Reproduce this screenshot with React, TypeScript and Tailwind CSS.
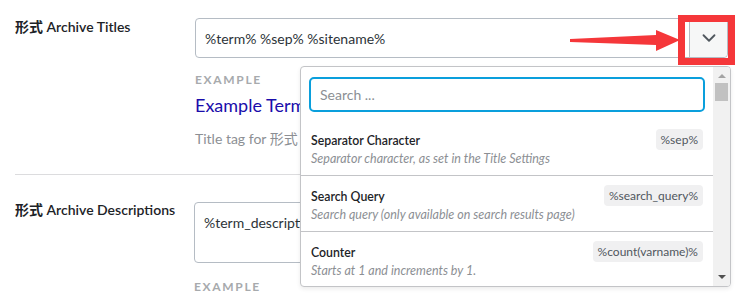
import { ChevronDown } from "lucide-react";

const font = "font-['Lato','Noto_Sans_CJK_SC',sans-serif]";

type Variable = { title: string; desc: string; tag: string };

const variables: Variable[] = [
  { title: "Separator Character", desc: "Separator character, as set in the Title Settings", tag: "%sep%" },
  { title: "Search Query", desc: "Search query (only available on search results page)", tag: "%search_query%" },
  { title: "Counter", desc: "Starts at 1 and increments by 1.", tag: "%count(varname)%" },
];

const VariableRow = ({ v, last }: { v: Variable; last?: boolean }) => (
  <div className={`flex h-[56px] items-start justify-between px-[10px] pt-[9px] ${last ? "" : "border-b border-[#c3c4c7]"}`}>
    <div className="flex flex-col">
      <span className="pt-[3px] text-[12.3px] leading-[18px] font-semibold text-[#1d2327]">{v.title}</span>
      <span className="text-[12.5px] leading-[17px] italic text-[#8c8f94]">{v.desc}</span>
    </div>
    <span className="rounded-[4px] bg-[#f0f0f1] px-[5px] text-[12px] leading-[21px] text-[#50575e]">{v.tag}</span>
  </div>
);

const Dropdown = () => (
  <div className="absolute left-[300px] top-[66px] flex h-[221px] w-[431px] overflow-hidden rounded-[4px] border border-[#c3c4c7] bg-white shadow-[0_2px_4px_rgba(0,0,0,0.08)]">
    <div className="flex-1">
      <div className="px-[8px] pt-[10px] pb-[8px]">
        <div className="flex h-[35px] items-center rounded-[5px] border-2 border-[#0a9fdc] px-[9px] text-[14px] text-[#8c8f94]">
          Search ...
        </div>
      </div>
      {variables.map((v, i) => (
        <VariableRow key={v.title} v={v} last={i === variables.length - 1} />
      ))}
    </div>
    {/* scrollbar */}
    <div className="flex w-[17px] flex-col items-center bg-[#f1f1f1]">
      <div className="mt-[7px] h-0 w-0 border-x-[4px] border-b-[4px] border-x-transparent border-b-[#a3a3a3]" />
      <div className="mt-[5px] h-[18px] w-[13px] bg-[#c1c1c1]" />
      <div className="flex-1" />
      <div className="mb-[7px] h-0 w-0 border-x-[4px] border-t-[4px] border-x-transparent border-t-[#505050]" />
    </div>
  </div>
);

export default function App() {
  return (
    <div className={`relative h-[300px] w-[749px] overflow-hidden bg-white ${font}`}>
      <div className="px-[15px]">
        {/* Archive titles */}
        <div className="flex pt-[18px]">
          <div className="w-[180px] text-[14px] leading-[18px] font-semibold text-[#1d2327]">形式 Archive Titles</div>
          <div className="w-[533px]">
            <div className="flex h-[40px] items-stretch rounded-[4px] border border-[#b5bcc4] bg-white">
              <div className="flex flex-1 items-center pl-[9px] text-[14px] text-[#2c3338]">%term% %sep% %sitename%</div>
              <div className="flex w-[38px] items-center justify-center rounded-r-[4px] border-l border-[#b5bcc4] bg-[#f6f7f7]">
                <ChevronDown className="h-[22px] w-[22px] text-[#50575e]" strokeWidth={2} />
              </div>
            </div>
            <div className="mt-[14px] text-[12px] leading-[16px] font-bold tracking-[0.14em] text-[#a7aaad]">EXAMPLE</div>
            <div className="mt-[5px] text-[18px] leading-[24px] text-[#1a0dab]">Example Term Archive</div>
            <div className="mt-[12px] text-[14px] leading-[20px] text-[#8c8f94]">Title tag for 形式 archives</div>
          </div>
        </div>
        <div className="mt-[25px] h-px w-[713px] bg-[#dcdcde]" />
        {/* Archive descriptions */}
        <div className="flex pt-[26px]">
          <div className="w-[179px] text-[14px] leading-[18px] font-semibold text-[#1d2327]">形式 Archive Descriptions</div>
          <div className="w-[534px]">
            <div className="mt-[1px] h-[61px] rounded-[4px] border border-[#b5bcc4] px-[9px] pt-[10px] text-[14px] leading-[20px] text-[#2c3338]">
              %term_description%
            </div>
            <div className="mt-[16px] text-[12px] leading-[16px] font-bold tracking-[0.14em] text-[#a7aaad]">EXAMPLE</div>
          </div>
        </div>
      </div>

      <Dropdown />

      {/* annotation */}
      <svg className="absolute left-[568px] top-[27px]" width="114" height="26" viewBox="0 0 114 26">
        <polygon points="2,12 88,8 88,3 112,13 88,24 88,18 2,15" fill="#f5373a" />
      </svg>
      <div className="absolute left-[678px] top-[15px] h-[50px] w-[57px] border-[7px] border-[#f5373a]" />
    </div>
  );
}
